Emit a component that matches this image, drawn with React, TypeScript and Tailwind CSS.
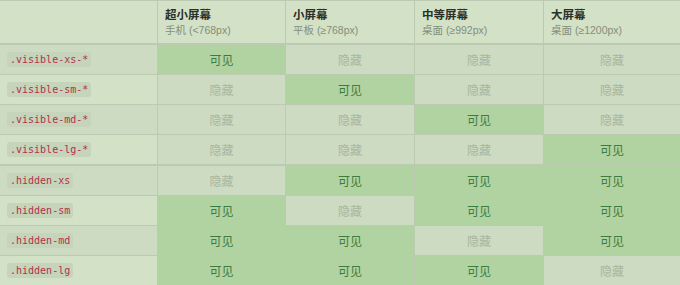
import React from "react";

const cols = [
  { t: "超小屏幕", s: "手机 (<768px)" },
  { t: "小屏幕", s: "平板 (≥768px)" },
  { t: "中等屏幕", s: "桌面 (≥992px)" },
  { t: "大屏幕", s: "桌面 (≥1200px)" },
];

const widths = ["w-[128px]", "w-[129px]", "w-[129px]", "flex-1"];

const groups: { code: string; vis: boolean[] }[][] = [
  [
    { code: ".visible-xs-*", vis: [true, false, false, false] },
    { code: ".visible-sm-*", vis: [false, true, false, false] },
    { code: ".visible-md-*", vis: [false, false, true, false] },
    { code: ".visible-lg-*", vis: [false, false, false, true] },
  ],
  [
    { code: ".hidden-xs", vis: [false, true, true, true] },
    { code: ".hidden-sm", vis: [true, false, true, true] },
    { code: ".hidden-md", vis: [true, true, false, true] },
    { code: ".hidden-lg", vis: [true, true, true, false] },
  ],
];

export default function App() {
  return (
    <div
      className="w-[680px] h-[285px] overflow-hidden bg-[#d3e1c7]"
      style={{ fontFamily: '"Noto Sans CJK SC", sans-serif' }}
    >
      <div className="border-t border-[#bccab2]">
        <div className="flex h-[44px] border-b-2 border-[#bccab2]">
          <div className="w-[158px] border-r border-[#bccab2]" />
          {cols.map((c, i) => (
            <div
              key={i}
              className={`${widths[i]} ${i < 3 ? "border-r border-[#bccab2]" : ""} pl-[7px] pt-[6px]`}
            >
              <div className="text-[11.5px] leading-[15px] font-bold text-[#2b3027]">{c.t}</div>
              <div
                className="text-[10.5px] leading-[13px] mt-[2px] text-[#848f7b]"
                style={{ fontFamily: '"Liberation Sans", "Noto Sans CJK SC", sans-serif' }}
              >
                {c.s}
              </div>
            </div>
          ))}
        </div>
        {groups.map((g, gi) =>
          g.map((r, ri) => {
            const odd = ri % 2 === 0;
            const lastOfFirst = gi === 0 && ri === 3;
            return (
              <div
                key={r.code}
                className={`flex ${lastOfFirst ? "h-[31px] border-b-2" : "h-[30px] border-b"} border-[#bccab2]`}
              >
                <div
                  className={`w-[158px] border-r border-[#bccab2] flex items-center pl-[7px] ${
                    odd ? "bg-[#ccdbc1]" : "bg-[#d3e1c7]"
                  }`}
                >
                  <code
                    className="text-[10px] leading-[13px] px-[3px] py-[1px] rounded-[3px] bg-[#c6d4bb] text-[#b3304c]"
                    style={{ fontFamily: '"DejaVu Sans Mono", "Liberation Mono", monospace' }}
                  >
                    {r.code}
                  </code>
                </div>
                {r.vis.map((v, ci) => (
                  <div
                    key={ci}
                    className={`${widths[ci]} ${ci < 3 ? "border-r border-[#bccab2]" : ""} flex items-center justify-center text-[12px] ${
                      v ? "bg-[#b1d2a1] text-[#3d7c3f]" : "bg-[#ccdbc1] text-[#a9b69f]"
                    }`}
                  >
                    {v ? "可见" : "隐藏"}
                  </div>
                ))}
              </div>
            );
          })
        )}
      </div>
    </div>
  );
}
